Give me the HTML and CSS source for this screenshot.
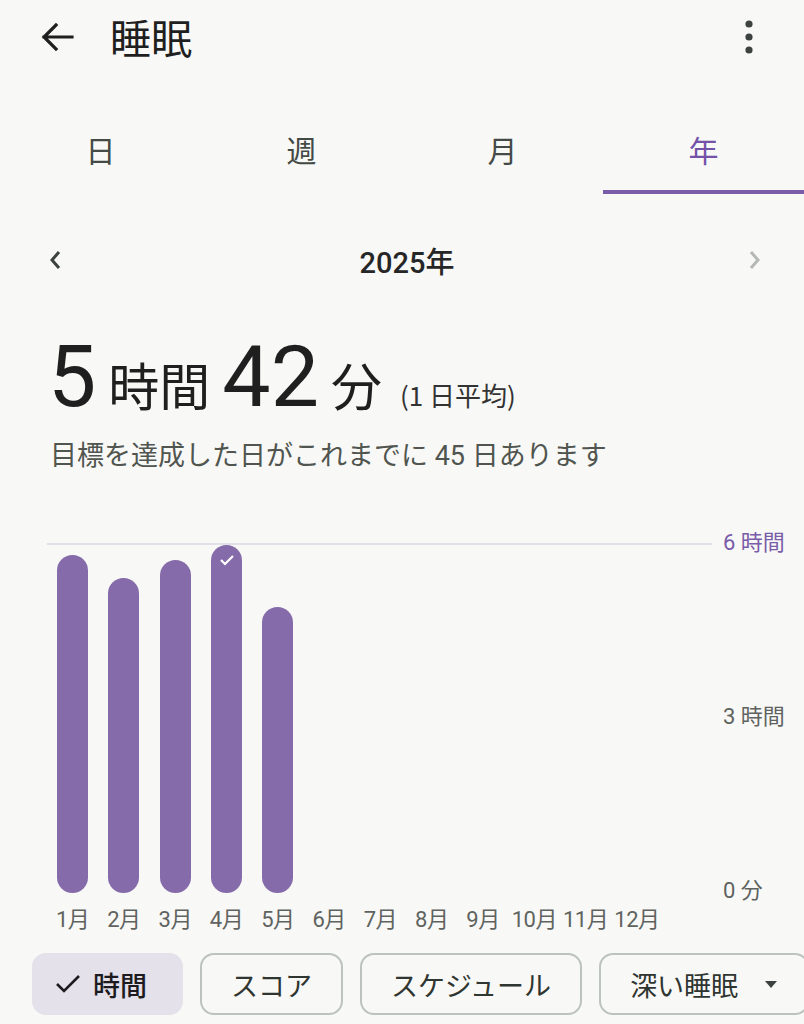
FILE: index.html
```html
<!DOCTYPE html>
<html lang="ja">
<head>
    <meta charset="UTF-8">
    <meta name="viewport" content="width=device-width, initial-scale=1.0">
    <title>睡眠</title>
    <link rel="stylesheet" href="styles.css">
</head>
<body>

<div class="topbar">
    <svg class="back" width="34" height="30" viewBox="0 0 34 30">
        <path d="M32 15H4M16 3L4 15l12 12" fill="none" stroke="#1f1f1f" stroke-width="3.2" stroke-linecap="square"/>
    </svg>
    <h1>睡眠</h1>
    <svg class="more" width="10" height="34" viewBox="0 0 10 34">
        <circle cx="5" cy="4" r="3.6" fill="#3c4240"/>
        <circle cx="5" cy="17" r="3.6" fill="#3c4240"/>
        <circle cx="5" cy="30" r="3.6" fill="#3c4240"/>
    </svg>
</div>

<!-- 期間タブ -->
<div class="tabs">
    <div class="tab">日</div>
    <div class="tab">週</div>
    <div class="tab">月</div>
    <div class="tab active">年</div>
</div>

<div class="period">
    <svg width="14" height="22" viewBox="0 0 14 22"><path d="M11 3L4 11l7 8" fill="none" stroke="#3c4240" stroke-width="3"/></svg>
    <span>2025年</span>
    <svg width="14" height="22" viewBox="0 0 14 22"><path d="M3 3l7 8-7 8" fill="none" stroke="#b4b8b6" stroke-width="3"/></svg>
</div>

<div class="summary">
    <div class="total">
        <span class="num">5</span><span class="unit">時間</span><span class="num">42</span><span class="unit">分</span><span class="note">(1 日平均)</span>
    </div>
    <p class="goal">目標を達成した日がこれまでに 45 日あります</p>
</div>

<div class="chart">
    <div class="plot">
        <div class="bars" id="bars"></div>
        <div class="months" id="months"></div>
    </div>
    <div class="axis">
        <span class="top">6 時間</span>
        <span>3 時間</span>
        <span>0 分</span>
    </div>
</div>

<div class="chips">
    <div class="chip selected">
        <svg width="26" height="20" viewBox="0 0 26 20"><path d="M2 10l7 7L24 2" fill="none" stroke="#1d1b20" stroke-width="2.6"/></svg>
        時間
    </div>
    <div class="chip">スコア</div>
    <div class="chip">スケジュール</div>
    <div class="chip">深い睡眠
        <svg width="14" height="10" viewBox="0 0 14 10"><path d="M1 2h12L7 9z" fill="#3c4240"/></svg>
    </div>
</div>

<script>
    // 月ごとの平均睡眠（時間）、最大6時間
    const hours = [5.83, 5.43, 5.74, 6.0, 4.93, 0, 0, 0, 0, 0, 0, 0];
    const plotHeight = 348;
    const barsEl = document.getElementById('bars');
    const monthsEl = document.getElementById('months');

    hours.forEach((h, i) => {
        const col = document.createElement('div');
        col.className = 'col';
        if (h > 0) {
            const bar = document.createElement('div');
            bar.className = 'bar';
            bar.style.height = Math.round(h / 6 * plotHeight) + 'px';
            if (h >= 6) {
                bar.innerHTML = '<svg width="16" height="12" viewBox="0 0 16 12"><path d="M2 6l4 4 8-8" fill="none" stroke="#fff" stroke-width="2.2"/></svg>';
            }
            col.appendChild(bar);
        }
        barsEl.appendChild(col);

        const label = document.createElement('div');
        label.className = 'month';
        label.textContent = (i + 1) + '月';
        monthsEl.appendChild(label);
    });
</script>

</body>
</html>
```

FILE: styles.css
```css
body {
    margin: 0;
    padding: 0;
    background-color: #f8f8f6;
    color: #1f1f1f;
    font-family: "Roboto", "Noto Sans CJK JP", sans-serif;
    width: 804px;
    height: 1024px;
    overflow: hidden;
}

.topbar {
    height: 80px;
    display: flex;
    align-items: center;
    padding: 0 40px;
}

.topbar .back {
    margin-right: 36px;
    margin-top: -6px;
}

.topbar h1 {
    margin: -8px 0 0 0;
    font-size: 41px;
    font-weight: 400;
    flex: 1;
    font-family: "Noto Sans CJK JP", sans-serif;
}

.topbar .more {
    margin-right: 10px;
    margin-top: -6px;
}

/* タブ */
.tabs {
    display: flex;
    margin-top: 30px;
}

.tab {
    flex: 1;
    height: 84px;
    line-height: 78px;
    text-align: center;
    font-size: 30px;
    color: #444a46;
    border-bottom: 4px solid transparent;
    font-family: "Noto Sans CJK JP", sans-serif;
    box-sizing: border-box;
}

.tab.active {
    color: #7452a8;
    border-bottom-color: #7a5ca8;
}

.period {
    margin-top: 36px;
    height: 60px;
    display: flex;
    align-items: center;
    justify-content: space-between;
    padding: 0 42px 0 48px;
}

.period span {
    font-size: 29px;
    font-weight: 500;
    color: #262626;
    margin-left: 4px;
}

/* 平均 */
.summary {
    padding: 0 48px;
    margin-top: 44px;
}

.total {
    display: flex;
    align-items: baseline;
    line-height: 1;
}

.total .num {
    font-size: 86px;
    margin-right: 12px;
}

.total .unit {
    font-size: 51px;
    margin-right: 12px;
    font-family: "Noto Sans CJK JP", sans-serif;
}

.total .unit:nth-of-type(4) {
    margin-right: 18px;
}

.total .note {
    font-size: 26px;
    color: #333;
    font-family: "Noto Sans CJK JP", sans-serif;
}

.goal {
    margin: 14px 0 0 2px;
    font-size: 27px;
    color: #50554f;
}

/* グラフ */
.chart {
    display: flex;
    margin-top: 70px;
    padding-left: 47px;
}

.plot {
    width: 665px;
}

.bars {
    height: 348px;
    border-top: 2px solid #e2dfe8;
    box-sizing: border-box;
    display: grid;
    grid-template-columns: repeat(12, 51.3px);
    align-items: end;
}

.col {
    display: flex;
    justify-content: center;
}

.bar {
    width: 31px;
    background-color: #866bab;
    border-radius: 16px;
    display: flex;
    justify-content: center;
    padding-top: 9px;
    box-sizing: border-box;
}

.bar svg {
    display: block;
}

.months {
    display: grid;
    grid-template-columns: repeat(12, 51.3px);
    margin-top: 14px;
}

.month {
    text-align: center;
    font-size: 22px;
    color: #5f6360;
    line-height: 30px;
    letter-spacing: -0.5px;
}

.axis {
    height: 378px;
    margin-top: -15px;
    margin-left: 11px;
    display: flex;
    flex-direction: column;
    justify-content: space-between;
}

.axis span {
    line-height: 30px;
    font-size: 22px;
    color: #5f6360;
}

.axis .top {
    color: #7a5ca8;
}

/* チップ */
.chips {
    display: flex;
    gap: 17px;
    padding-left: 32px;
    margin-top: 18px;
}

.chip {
    height: 62px;
    box-sizing: border-box;
    border: 2px solid #bcc3be;
    border-radius: 14px;
    display: flex;
    align-items: center;
    padding: 0 29px;
    font-size: 27px;
    color: #2f3530;
    white-space: nowrap;
    flex-shrink: 0;
    gap: 12px;
}

.chip.selected {
    background-color: #e4e1ea;
    border-color: #e4e1ea;
    padding: 0 34px 0 21px;
    color: #1d1b20;
    font-weight: 500;
}

.chip:last-child svg {
    margin-left: 14px;
}
```
